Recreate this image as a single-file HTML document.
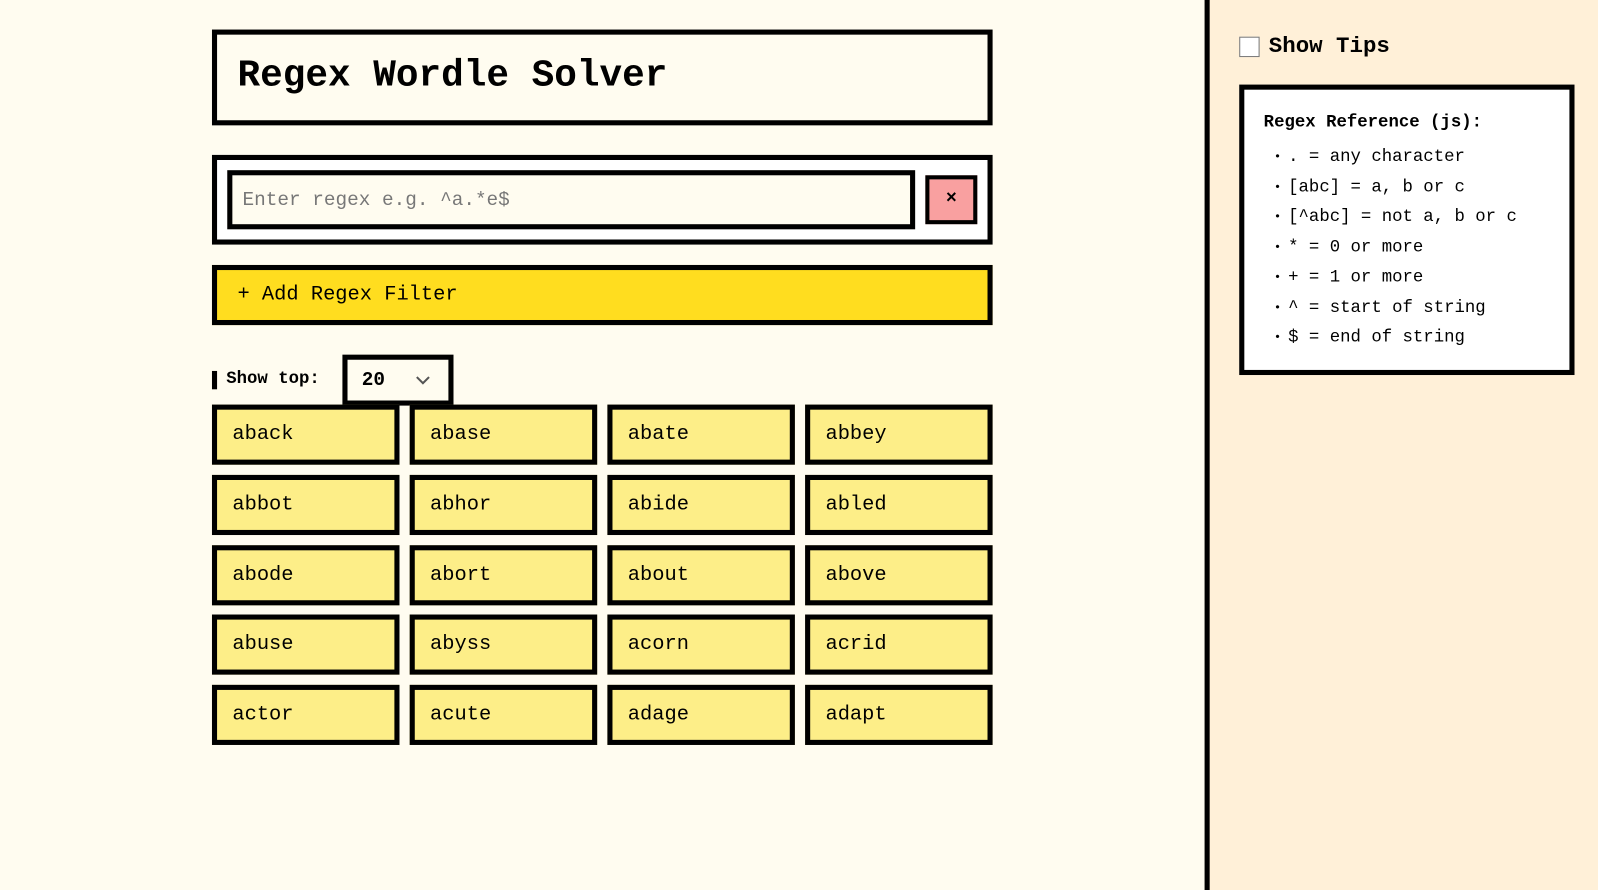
<!DOCTYPE html>
<html><head><style>
*{box-sizing:border-box;margin:0;padding:0}
html,body{width:1598px;height:890px;overflow:hidden}
body{background:#fffcf0;font-family:"Liberation Mono",monospace;color:#000}
#root{position:relative;width:1568px;height:874px;transform:scale(1.0191);transform-origin:0 0}
.abs{position:absolute}
.title{left:208px;top:29px;width:766px;height:94px;border:5px solid #000;background:#fffcf0;font-weight:bold;font-size:37px;padding:20px 0 0 20px}
.wrap{left:208px;top:152px;width:766px;height:88px;border:5px solid #000;background:#fff}
.inp{left:223px;top:167px;width:675px;height:58px;border:5px solid #000;background:#fffcf0;color:#777;font-size:19px;padding:13px 0 0 10px}
.x{left:908px;top:172px;width:51px;height:48px;border:4px solid #000;background:#f9a0a0;font-size:18px;font-weight:bold;text-align:center;line-height:39px}
.add{left:208px;top:260px;width:766px;height:59px;border:5px solid #000;background:#ffdd1f;font-size:20px;padding:13px 0 0 20px}
.bar{left:208px;top:364px;width:5px;height:18px;background:#000}
.lbl{left:222px;top:363px;font-size:17px;font-weight:bold}
.sel{left:336px;top:348px;width:109px;height:50px;border:5px solid #000;background:#fffcf0;font-size:19px;font-weight:bold;padding:9px 0 0 14px}
.w{width:184px;height:59px;border:5px solid #000;background:#fdee88;font-size:20px;padding:13px 0 0 15px}
.side{left:1182px;top:0;width:420px;height:900px;border-left:5px solid #000;background:#fff0d8}
.cb{left:1216px;top:36px;width:20px;height:20px;border:1px solid #777;background:#fff}
.st{left:1245px;top:33px;font-size:22px;font-weight:bold}
.panel{left:1216px;top:83px;width:329px;height:285px;border:5px solid #000;background:#fff;padding:23px 0 0 19px}
.panel b{font-size:17px;display:block;margin-bottom:10px}
.panel div{font-size:17px;line-height:29.5px;padding-left:10px}
.panel div span{font-size:12px;display:inline-block;width:14px;vertical-align:1px}
</style></head><body><div id="root">
<div class="abs title">Regex Wordle Solver</div>
<div class="abs wrap"></div>
<div class="abs inp">Enter regex e.g. ^a.*e$</div>
<div class="abs x">×</div>
<div class="abs add">+ Add Regex Filter</div>
<div class="abs bar"></div>
<div class="abs lbl">Show top:</div>
<div class="abs sel">20<svg class="abs" style="left:66px;top:14px" width="16" height="12" viewBox="0 0 16 12"><path d="M2 3l6 6 6-6" stroke="#555" stroke-width="2" fill="none"/></svg></div>
<div class="abs w" style="left:208px;top:397px">aback</div>
<div class="abs w" style="left:402px;top:397px">abase</div>
<div class="abs w" style="left:596px;top:397px">abate</div>
<div class="abs w" style="left:790px;top:397px">abbey</div>
<div class="abs w" style="left:208px;top:466px">abbot</div>
<div class="abs w" style="left:402px;top:466px">abhor</div>
<div class="abs w" style="left:596px;top:466px">abide</div>
<div class="abs w" style="left:790px;top:466px">abled</div>
<div class="abs w" style="left:208px;top:535px">abode</div>
<div class="abs w" style="left:402px;top:535px">abort</div>
<div class="abs w" style="left:596px;top:535px">about</div>
<div class="abs w" style="left:790px;top:535px">above</div>
<div class="abs w" style="left:208px;top:603px">abuse</div>
<div class="abs w" style="left:402px;top:603px">abyss</div>
<div class="abs w" style="left:596px;top:603px">acorn</div>
<div class="abs w" style="left:790px;top:603px">acrid</div>
<div class="abs w" style="left:208px;top:672px">actor</div>
<div class="abs w" style="left:402px;top:672px">acute</div>
<div class="abs w" style="left:596px;top:672px">adage</div>
<div class="abs w" style="left:790px;top:672px">adapt</div>
<div class="abs side"></div>
<div class="abs cb"></div>
<div class="abs st">Show Tips</div>
<div class="abs panel"><b>Regex Reference (js):</b>
<div><span>•</span>. = any character</div>
<div><span>•</span>[abc] = a, b or c</div>
<div><span>•</span>[^abc] = not a, b or c</div>
<div><span>•</span>* = 0 or more</div>
<div><span>•</span>+ = 1 or more</div>
<div><span>•</span>^ = start of string</div>
<div><span>•</span>$ = end of string</div>
</div>
</div></body></html>
